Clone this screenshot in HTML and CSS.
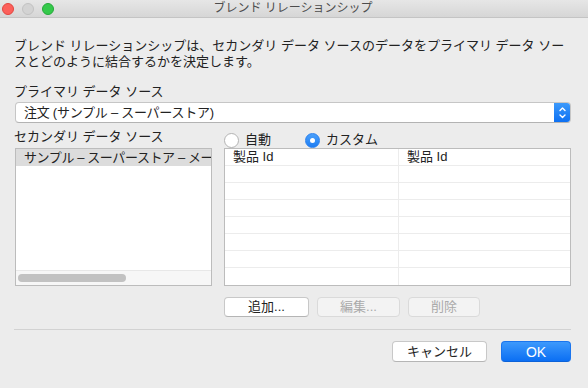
FILE: index.html
```html
<!DOCTYPE html>
<html lang="ja">
<head>
<meta charset="utf-8">
<title>ブレンド リレーションシップ</title>
<link rel="stylesheet" href="styles.css">
</head>
<body>
<div class="window">
  <div class="titlebar">
    <div class="lights">
      <span class="light red"></span>
      <span class="light idle"></span>
      <span class="light green"></span>
    </div>
    <div class="title">ブレンド リレーションシップ</div>
    <div></div>
  </div>
  <div class="content">
    <p class="desc">ブレンド リレーションシップは、セカンダリ データ ソースのデータをプライマリ データ ソー<br>スとどのように結合するかを決定します。</p>
    <div class="label primary-label">プライマリ データ ソース</div>
    <div class="popup">
      <span class="popup-text">注文 (サンプル – スーパーストア)</span>
      <span class="popup-arrows">
        <svg width="17" height="21" viewBox="0 0 17 21"><path d="M6 8.5 L8.5 6 L11 8.5 M6 13 L8.5 15.5 L11 13" fill="none" stroke="#fff" stroke-width="1.4" stroke-linecap="round" stroke-linejoin="round"/></svg>
      </span>
    </div>
    <div class="mapping">
      <div class="label secondary-label">セカンダリ データ ソース</div>
      <div class="radios">
        <label class="radio"><span class="radio-dot"></span><span>自動</span></label>
        <label class="radio"><span class="radio-dot checked"></span><span>カスタム</span></label>
      </div>
      <div class="source-list">
        <div class="source-row selected"><span class="source-name">サンプル – スーパーストア – メーカ</span></div>
        <div class="source-fill"></div>
        <div class="hscroll"><div class="hthumb"></div></div>
      </div>
      <div class="field-table">
        <div class="cell">製品 Id</div><div class="cell">製品 Id</div>
        <div class="cell"></div><div class="cell"></div>
        <div class="cell"></div><div class="cell"></div>
        <div class="cell"></div><div class="cell"></div>
        <div class="cell"></div><div class="cell"></div>
        <div class="cell"></div><div class="cell"></div>
        <div class="cell"></div><div class="cell"></div>
        <div class="cell last"></div><div class="cell last"></div>
      </div>
      <div></div>
      <div class="table-buttons">
        <button class="btn btn-add">追加...</button>
        <button class="btn btn-edit" disabled>編集...</button>
        <button class="btn btn-delete" disabled>削除</button>
      </div>
    </div>
    <div class="separator"></div>
    <div class="footer">
      <button class="btn btn-cancel">キャンセル</button>
      <button class="btn btn-ok">OK</button>
    </div>
  </div>
</div>
</body>
</html>
```

FILE: styles.css
```css
* { box-sizing: border-box; }
html, body { margin: 0; padding: 0; }
body {
  font-family: "Liberation Sans", "Noto Sans CJK JP", sans-serif;
  font-size: 13px;
  color: #222;
  background: #ececec;
}
.window {
  width: 588px;
  height: 388px;
  background: #ececec;
  display: flex;
  flex-direction: column;
  overflow: hidden;
}
.titlebar {
  height: 18px;
  border-bottom: 1px solid #c4c4c4;
  background: linear-gradient(#e6e6e6, #d6d6d6);
  display: grid;
  grid-template-columns: 1fr auto 1fr;
  align-items: center;
}
.lights {
  display: flex;
  gap: 8px;
  padding-left: 2px;
  align-items: center;
}
.light {
  width: 12px;
  height: 12px;
  border-radius: 50%;
  display: block;
}
.light.red { background: #fc605b; border: 1px solid #e2463f; }
.light.idle { background: #d3d3d3; border: 1px solid #c2c2c2; }
.light.green { background: #35c94b; border: 1px solid #25a83a; }
.title {
  color: #4d4d4d;
  font-size: 12px;
  line-height: 17px;
  padding-right: 2px;
}
.content {
  padding: 20px 17px 0 14px;
  display: flex;
  flex-direction: column;
}
.desc {
  margin: 0;
  line-height: 16px;
}
.label { line-height: 16px; }
.primary-label { margin-top: 14px; }
.popup {
  margin-top: 2px;
  margin-left: 1px;
  height: 21px;
  background: #fff;
  border: 1px solid #c6c6c6;
  border-bottom-color: #b3b3b3;
  border-radius: 4px;
  display: flex;
  align-items: center;
  overflow: hidden;
}
.popup-text {
  flex: 1;
  padding-left: 8px;
  line-height: 19px;
  letter-spacing: -0.25px;
}
.popup-arrows {
  width: 17px;
  height: 21px;
  margin: -1px -1px -1px 0;
  background: linear-gradient(#3f9cfc, #0a6ef2);
  border-radius: 0 4px 4px 0;
  display: flex;
}
.mapping {
  margin-top: 6px;
  display: grid;
  grid-template-columns: 198px 347px;
  grid-template-rows: 19px 138px auto;
  column-gap: 12px;
}
.secondary-label { align-self: start; }
.radios {
  display: flex;
  gap: 34px;
  align-items: center;
  padding-top: 3px;
}
.radio {
  display: flex;
  align-items: center;
  gap: 6px;
  line-height: 16px;
}
.radio-dot {
  width: 15px;
  height: 15px;
  border-radius: 50%;
  background: #fff;
  border: 1px solid #b3b3b3;
  display: flex;
  align-items: center;
  justify-content: center;
}
.radio-dot.checked {
  background: linear-gradient(#4aa0fb, #1d7df3);
  border-color: #2a80ee;
}
.radio-dot.checked::after {
  content: "";
  width: 5px;
  height: 5px;
  border-radius: 50%;
  background: #fff;
}
.source-list {
  margin-left: 1px;
  border: 1px solid #bcbcbc;
  background: #fff;
  display: flex;
  flex-direction: column;
  overflow: hidden;
}
.source-row {
  height: 17px;
  line-height: 17px;
  padding-left: 8px;
  white-space: nowrap;
  overflow: hidden;
}
.source-name {
  display: block;
  overflow: hidden;
  letter-spacing: -0.4px;
}
.source-row.selected { background: #dcdcdc; }
.source-fill { flex: 1; }
.hscroll {
  height: 15px;
  border-top: 1px solid #e8e8e8;
  background: #f7f7f7;
  padding: 3px 0 0 2px;
}
.hthumb {
  width: 108px;
  height: 8px;
  border-radius: 4px;
  background: #c2c2c2;
}
.field-table {
  border: 1px solid #bcbcbc;
  background: #fff;
  display: grid;
  grid-template-columns: 174px 1fr;
  grid-auto-rows: 17px;
}
.cell {
  border-bottom: 1px solid #ececec;
  padding-left: 8px;
  line-height: 16px;
}
.cell:nth-child(odd) { border-right: 1px solid #ececec; }
.cell.last { border-bottom: none; }
.table-buttons {
  margin-top: 11px;
  display: flex;
  gap: 8px;
}
.btn {
  font-family: inherit;
  font-size: 13px;
  color: #222;
  height: 20px;
  padding: 0;
  background: #fff;
  border: 1px solid #c8c8c8;
  border-bottom-color: #b5b5b5;
  border-radius: 4px;
  line-height: 18px;
}
.btn:disabled {
  background: #f3f3f3;
  border-color: #dadada;
  color: #aaaaaa;
}
.btn-add { width: 85px; }
.btn-edit { width: 83px; }
.btn-delete { width: 72px; }
.separator {
  margin-top: 12px;
  height: 1px;
  background: #d2d2d2;
}
.footer {
  margin-top: 11px;
  display: flex;
  justify-content: flex-end;
  gap: 14px;
}
.btn-cancel { width: 95px; height: 21px; }
.btn-ok {
  width: 70px;
  height: 21px;
  font-size: 14px;
  color: #fff;
  background: linear-gradient(#3d99fc, #0b6ff3);
  border: 1px solid #1a75ee;
  border-bottom-color: #0c62d8;
}
```
